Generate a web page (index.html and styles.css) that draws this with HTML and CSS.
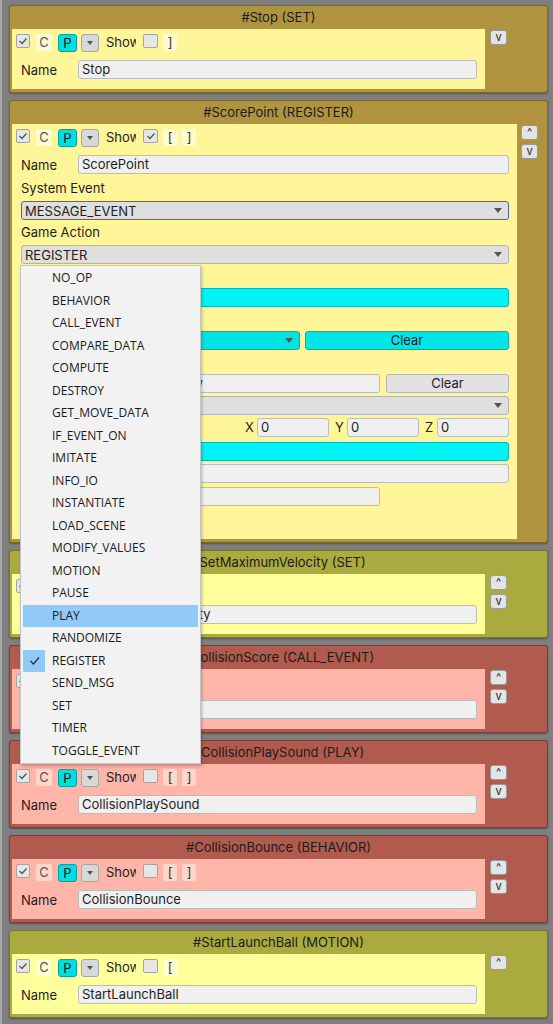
FILE: index.html
```html
<!DOCTYPE html>
<html>
<head>
<meta charset="utf-8">
<link rel="stylesheet" href="styles.css">
</head>
<body>
<div class="page">

  <div class="panel gold">
    <div class="title">#Stop (SET)</div>
    <div class="body">
      <div class="inner">
        <div class="toolbar">
          <div class="cb on"><svg width="12" height="12" viewBox="0 0 12 12"><polyline points="2.5,6 5,8.5 9.5,3.5" fill="none" stroke="#555" stroke-width="1.3"/></svg></div>
          <div class="tb btn-c">C</div>
          <div class="tb btn-p">P</div>
          <div class="tb btn-dd"><span class="tri-s"></span></div>
          <div class="show">Show</div>
          <div class="cb cb2"></div>
          <div class="tb br">]</div>
        </div>
        <div class="namerow"><span class="lbl">Name</span><div class="field">Stop</div></div>
      </div>
      <div class="side"><div class="mv">v</div></div>
    </div>
  </div>

  <div class="panel gold wide">
    <div class="title">#ScorePoint (REGISTER)</div>
    <div class="body">
      <div class="inner">
        <div class="toolbar">
          <div class="cb on"><svg width="12" height="12" viewBox="0 0 12 12"><polyline points="2.5,6 5,8.5 9.5,3.5" fill="none" stroke="#555" stroke-width="1.3"/></svg></div>
          <div class="tb btn-c">C</div>
          <div class="tb btn-p">P</div>
          <div class="tb btn-dd"><span class="tri-s"></span></div>
          <div class="show">Show</div>
          <div class="cb cb2 on"><svg width="12" height="12" viewBox="0 0 12 12"><polyline points="2.5,6 5,8.5 9.5,3.5" fill="none" stroke="#555" stroke-width="1.3"/></svg></div>
          <div class="tb br">[</div>
          <div class="tb br">]</div>
        </div>
        <div class="namerow"><span class="lbl">Name</span><div class="field">ScorePoint</div></div>
        <div class="plbl first">System Event</div>
        <div class="dd focus"><span>MESSAGE_EVENT</span><span class="tri"></span></div>
        <div class="plbl tall">Game Action</div>
        <div class="dd"><span>REGISTER</span><span class="tri"></span></div>
        <div class="plbl">Register</div>
        <div class="cyan"></div>
        <div class="plbl">Variable</div>
        <div class="pair">
          <div class="dd cyan-dd"><span>Score</span><span class="tri"></span></div>
          <div class="btn clear-c">Clear</div>
        </div>
        <div class="plbl">Object</div>
        <div class="pair">
          <div class="field f-half">Drag Object Here To Preview</div>
          <div class="btn clear-g">Clear</div>
        </div>
        <div class="dd gap3"><span>NONE</span><span class="tri"></span></div>
        <div class="xyz">
          <span class="sp">Position</span>
          <span class="ax">X</span><div class="field n">0</div>
          <span class="ax">Y</span><div class="field n">0</div>
          <span class="ax">Z</span><div class="field n last">0</div>
        </div>
        <div class="cyan gap5"></div>
        <div class="field full gap3"></div>
        <div class="field f-half gap4"></div>
      </div>
      <div class="side"><div class="mv">^</div><div class="mv">v</div></div>
    </div>
  </div>

  <div class="panel olive">
    <div class="title">#SetMaximumVelocity (SET)</div>
    <div class="body">
      <div class="inner">
        <div class="toolbar">
          <div class="cb on"><svg width="12" height="12" viewBox="0 0 12 12"><polyline points="2.5,6 5,8.5 9.5,3.5" fill="none" stroke="#555" stroke-width="1.3"/></svg></div>
          <div class="tb btn-c">C</div>
          <div class="tb btn-p">P</div>
          <div class="tb btn-dd"><span class="tri-s"></span></div>
          <div class="show">Show</div>
          <div class="cb cb2"></div>
          <div class="tb br">[</div>
          <div class="tb br">]</div>
        </div>
        <div class="namerow"><span class="lbl">Name</span><div class="field">SetMaximumVelocity</div></div>
      </div>
      <div class="side"><div class="mv">^</div><div class="mv">v</div></div>
    </div>
  </div>

  <div class="panel red">
    <div class="title">#CollisionScore (CALL_EVENT)</div>
    <div class="body">
      <div class="inner">
        <div class="toolbar">
          <div class="cb on"><svg width="12" height="12" viewBox="0 0 12 12"><polyline points="2.5,6 5,8.5 9.5,3.5" fill="none" stroke="#555" stroke-width="1.3"/></svg></div>
          <div class="tb btn-c">C</div>
          <div class="tb btn-p">P</div>
          <div class="tb btn-dd"><span class="tri-s"></span></div>
          <div class="show">Show</div>
          <div class="cb cb2"></div>
          <div class="tb br">[</div>
          <div class="tb br">]</div>
        </div>
        <div class="namerow"><span class="lbl">Name</span><div class="field">CollisionScore</div></div>
      </div>
      <div class="side"><div class="mv">^</div><div class="mv">v</div></div>
    </div>
  </div>

  <div class="panel red">
    <div class="title">#CollisionPlaySound (PLAY)</div>
    <div class="body">
      <div class="inner">
        <div class="toolbar">
          <div class="cb on"><svg width="12" height="12" viewBox="0 0 12 12"><polyline points="2.5,6 5,8.5 9.5,3.5" fill="none" stroke="#555" stroke-width="1.3"/></svg></div>
          <div class="tb btn-c">C</div>
          <div class="tb btn-p">P</div>
          <div class="tb btn-dd"><span class="tri-s"></span></div>
          <div class="show">Show</div>
          <div class="cb cb2"></div>
          <div class="tb br">[</div>
          <div class="tb br">]</div>
        </div>
        <div class="namerow"><span class="lbl">Name</span><div class="field">CollisionPlaySound</div></div>
      </div>
      <div class="side"><div class="mv">^</div><div class="mv">v</div></div>
    </div>
  </div>

  <div class="panel red">
    <div class="title">#CollisionBounce (BEHAVIOR)</div>
    <div class="body">
      <div class="inner">
        <div class="toolbar">
          <div class="cb on"><svg width="12" height="12" viewBox="0 0 12 12"><polyline points="2.5,6 5,8.5 9.5,3.5" fill="none" stroke="#555" stroke-width="1.3"/></svg></div>
          <div class="tb btn-c">C</div>
          <div class="tb btn-p">P</div>
          <div class="tb btn-dd"><span class="tri-s"></span></div>
          <div class="show">Show</div>
          <div class="cb cb2"></div>
          <div class="tb br">[</div>
          <div class="tb br">]</div>
        </div>
        <div class="namerow"><span class="lbl">Name</span><div class="field">CollisionBounce</div></div>
      </div>
      <div class="side"><div class="mv">^</div><div class="mv">v</div></div>
    </div>
  </div>

  <div class="panel olive">
    <div class="title">#StartLaunchBall (MOTION)</div>
    <div class="body">
      <div class="inner">
        <div class="toolbar">
          <div class="cb on"><svg width="12" height="12" viewBox="0 0 12 12"><polyline points="2.5,6 5,8.5 9.5,3.5" fill="none" stroke="#555" stroke-width="1.3"/></svg></div>
          <div class="tb btn-c">C</div>
          <div class="tb btn-p">P</div>
          <div class="tb btn-dd"><span class="tri-s"></span></div>
          <div class="show">Show</div>
          <div class="cb cb2"></div>
          <div class="tb br">[</div>
        </div>
        <div class="namerow"><span class="lbl">Name</span><div class="field">StartLaunchBall</div></div>
      </div>
      <div class="side"><div class="mv">^</div></div>
    </div>
  </div>

  <div class="menu">
    <div class="mi">NO_OP</div>
    <div class="mi">BEHAVIOR</div>
    <div class="mi">CALL_EVENT</div>
    <div class="mi">COMPARE_DATA</div>
    <div class="mi">COMPUTE</div>
    <div class="mi">DESTROY</div>
    <div class="mi">GET_MOVE_DATA</div>
    <div class="mi">IF_EVENT_ON</div>
    <div class="mi">IMITATE</div>
    <div class="mi">INFO_IO</div>
    <div class="mi">INSTANTIATE</div>
    <div class="mi">LOAD_SCENE</div>
    <div class="mi">MODIFY_VALUES</div>
    <div class="mi">MOTION</div>
    <div class="mi">PAUSE</div>
    <div class="mi hl">PLAY</div>
    <div class="mi">RANDOMIZE</div>
    <div class="mi"><span class="chk"><svg width="22" height="22" viewBox="0 0 22 22"><polyline points="7.5,11 10.5,14 16,7.5" fill="none" stroke="#333" stroke-width="1.4"/></svg></span>REGISTER</div>
    <div class="mi">SEND_MSG</div>
    <div class="mi">SET</div>
    <div class="mi">TIMER</div>
    <div class="mi">TOGGLE_EVENT</div>
  </div>

</div>
</body>
</html>
```

FILE: styles.css
```css
html, body {
  margin: 0;
  padding: 0;
  height: 1024px;
  overflow: hidden;
}

body {
  background: linear-gradient(to right, #a8a8a8 0, #a8a8a8 2px, #7f7f7f 2px);
  font-family: Inter, "Noto Sans", sans-serif;
  font-size: 13px;
  color: #1e1e1e;
}

.page {
  position: relative;
  padding: 5px 0 0 9px;
}

.panel {
  width: 539px;
  box-sizing: border-box;
  border: 1px solid rgba(0, 0, 0, 0.3);
  border-radius: 3px;
  margin-bottom: 7px;
  padding-bottom: 3px;
  box-shadow: 0 1px 2px rgba(0, 0, 0, 0.35);
}

.gold { background: #b0933f; }
.gold .inner { background: #fff599; }
.gold .btn-c, .gold .br { background: #fffbd2; }

.olive { background: #abaa3e; }
.olive .inner { background: #ffff9b; }
.olive .btn-c, .olive .br { background: #ffffd2; }

.red { background: #b05b4d; }
.red .inner { background: #ffb5a8; }
.red .btn-c, .red .br { background: #ffd6ca; }

.title {
  height: 23px;
  line-height: 23px;
  text-align: center;
  color: #1b1b1b;
}

.body {
  display: flex;
  padding-left: 2px;
}

.inner {
  width: 473px;
  height: 60px;
  box-sizing: border-box;
  padding: 4px 8px 0 4px;
  display: flex;
  flex-direction: column;
}

.wide .inner {
  width: 505px;
  height: 415px;
}

.side {
  display: flex;
  flex-direction: column;
  gap: 4px;
  padding-top: 1px;
  margin-left: 5px;
}

.wide .side { margin-left: 4px; }

.mv {
  width: 17px;
  height: 15px;
  box-sizing: border-box;
  background: #e4e4e4;
  border: 1px solid #9a9a9a;
  border-radius: 3px;
  font-size: 11px;
  line-height: 13px;
  text-align: center;
  color: #222;
}

/* toolbar */
.toolbar {
  display: flex;
  align-items: flex-start;
  height: 18px;
  flex: none;
}

.cb {
  width: 14px;
  height: 14px;
  box-sizing: border-box;
  background: #e6e6e6;
  border: 1px solid #a3a3a3;
  border-radius: 2px;
  margin-top: 1px;
  display: flex;
  align-items: center;
  justify-content: center;
}

.cb2 {
  width: 15px;
  margin-left: 7px;
}

.tb {
  height: 17px;
  margin-top: 1px;
  box-sizing: border-box;
  text-align: center;
  line-height: 17px;
  border-radius: 2px;
}

.btn-c {
  width: 16px;
  margin-left: 6px;
  color: #555;
}

.btn-p {
  width: 19px;
  height: 18px;
  margin-left: 6px;
  background: #00dfe0;
  border: 1px solid #00a2aa;
  border-radius: 3px;
  line-height: 16px;
  color: #111;
}

.btn-dd {
  width: 18px;
  height: 18px;
  margin-left: 4px;
  background: #d8d8d8;
  border: 1px solid #a6a6a6;
  border-radius: 3px;
  display: flex;
  align-items: center;
  justify-content: center;
}

.tri-s {
  border-left: 3.5px solid transparent;
  border-right: 3.5px solid transparent;
  border-top: 4px solid #555;
}

.show {
  width: 30px;
  margin-left: 7px;
  overflow: hidden;
  white-space: nowrap;
  line-height: 18px;
}

.br {
  width: 14px;
  margin-left: 5px;
  color: #333;
}

/* name row */
.namerow {
  display: flex;
  align-items: center;
  margin-top: 9px;
  padding-left: 5px;
  flex: none;
}

.lbl { width: 57px; flex: none; }

.field {
  flex: 1;
  height: 19px;
  box-sizing: border-box;
  border: 1px solid #bcbcbc;
  background: #f0f0f0;
  border-radius: 3px;
  padding-left: 3px;
  line-height: 17px;
  white-space: nowrap;
  overflow: hidden;
  color: #1e1e1e;
}

/* expanded panel rows */
.plbl {
  height: 24px;
  line-height: 24px;
  padding-left: 5px;
  flex: none;
}

.plbl.first {
  margin-top: 2px;
  height: 25px;
  line-height: 25px;
}

.plbl.tall {
  height: 25px;
  line-height: 25px;
}

.dd {
  height: 19px;
  flex: none;
  box-sizing: border-box;
  background: #dfdfdf;
  border: 1px solid #b3b3b3;
  border-radius: 3px;
  display: flex;
  align-items: center;
  justify-content: space-between;
  padding: 0 6px 0 3px;
  margin-left: 5px;
}

.focus { border-color: #3f6ea6; }

.tri {
  border-left: 4px solid transparent;
  border-right: 4px solid transparent;
  border-top: 5px solid #555;
}

.cyan {
  height: 19px;
  flex: none;
  box-sizing: border-box;
  margin-left: 5px;
  background: #00f2f2;
  border: 1px solid #00bac2;
  border-radius: 3px;
}

.pair {
  display: flex;
  height: 19px;
  flex: none;
  margin-left: 5px;
}

.pair .dd { margin-left: 0; flex: 1; }

.cyan-dd {
  background: #00e3e4;
  border-color: #00b0b8;
}

.btn {
  height: 19px;
  box-sizing: border-box;
  border-radius: 3px;
  text-align: center;
  line-height: 17px;
}

.clear-c {
  width: 204px;
  margin-left: 5px;
  background: #00e6e7;
  border: 1px solid #00b0b8;
}

.clear-g {
  width: 123px;
  margin-left: 6px;
  background: #e2e2e2;
  border: 1px solid #b5b5b5;
}

.f-half {
  flex: none;
  width: 359px;
  margin-left: 5px;
}

.pair .f-half { margin-left: 0; }

.full {
  flex: none;
  margin-left: 5px;
}

.gap3 { margin-top: 3px; }
.gap4 { margin-top: 4px; }
.gap5 { margin-top: 5px; }

.xyz {
  display: flex;
  height: 19px;
  flex: none;
  margin-top: 3px;
  margin-left: 5px;
}

.sp { flex: 1; line-height: 19px; }

.ax {
  width: 12px;
  line-height: 19px;
}

.field.n {
  flex: 0 0 72px;
  margin-right: 6px;
}

.field.n.last { margin-right: 0; }

/* popup menu */
.menu {
  position: absolute;
  left: 20px;
  top: 265px;
  width: 181px;
  box-sizing: border-box;
  background: #f2f2f2;
  border: 1px solid #c6c6c6;
  padding: 1px 2px;
  box-shadow: 1px 2px 3px rgba(0, 0, 0, 0.25);
  font-family: "Open Sans", "Noto Sans", sans-serif;
  font-size: 12px;
  color: #1a1a1a;
}

.mi {
  position: relative;
  height: 22.5px;
  line-height: 22.5px;
  padding-left: 29px;
  white-space: nowrap;
}

.mi.hl { background: #91c9f7; }

.chk {
  position: absolute;
  left: 0;
  top: 0;
  width: 22px;
  height: 22.5px;
  background: #91c9f7;
  display: flex;
  align-items: center;
  justify-content: center;
}
```
